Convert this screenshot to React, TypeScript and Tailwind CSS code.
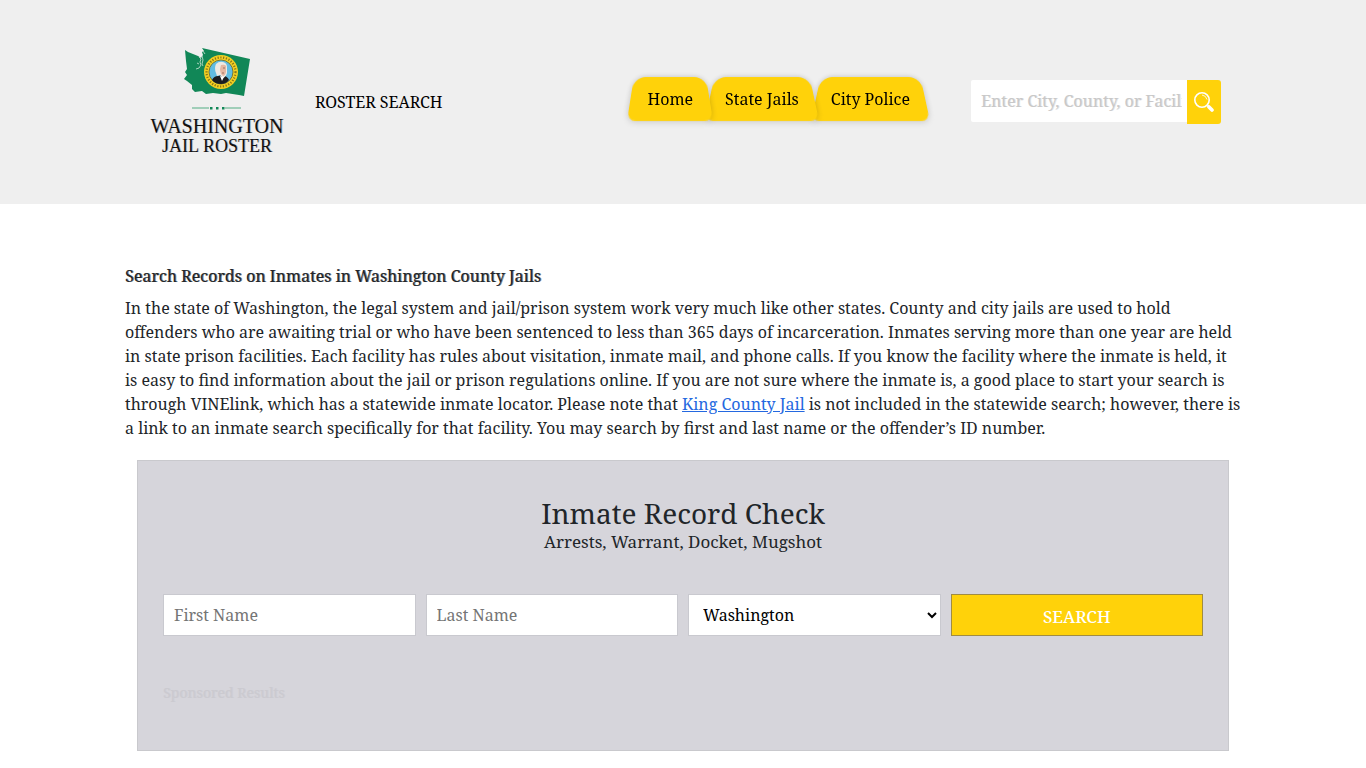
import React from "react";

const tabs = ["Home", "State Jails", "City Police"];
const layers = ["z-30", "z-20", "z-10"];

function StateFlag() {
  return (
    <svg width="66" height="64" viewBox="0 0 66 64" aria-hidden="true">
      <path
        d="M1 2 4 4 9 6 14 8 17 10 19 7 18 4 20 3 18 0 66 11 60 48 55 47 42 45 37 46 29 45 22 46 18 43 11 44 8 41 8 37 3 33 0 31 3 27 1 24 3 21 2 13Z"
        fill="#118757"
      />
      <path
        d="M15 9l2 2-1 3 1 3-2 3M18 8l1 4-1 4 1 2M13 15l2 1M12 21l3-1M19 3l2 3"
        stroke="#a9d3be"
        strokeWidth="1"
        fill="none"
      />
      <circle cx="37" cy="24" r="17" fill="#f3cf22" />
      <circle cx="37" cy="24" r="14.500" fill="none" stroke="#8a7618" strokeWidth="2.2" strokeDasharray="1.200 1.600" />
      <circle cx="37" cy="24" r="12" fill="#62bde2" stroke="#6f671d" strokeWidth="0.8" />
      <path d="M28 32q2-4 6-4l5-1q5 2 6 5-3 4-8 4-6 0-9-4Z" fill="#1b1d20" />
      <path d="M32 25q-2-5 0-9 3-3 7-2 4 1 4 5v6q-1 4-4 5l-3-3-3 1Z" fill="#eee9e3" />
      <path d="M37 17q4-1 5 1v6q-1 4-3 4-3-2-3-7Z" fill="#e5b7a2" />
      <path d="M39 20h2M38 25h2" stroke="#7c5547" strokeWidth="0.7" />
      <path d="M36 28l2 5 2-4Z" fill="#fff" />
      <path d="M8 60H25M41 60H57" stroke="#86c3a8" strokeWidth="1.6" />
      <path d="M26 59h2.500v2.500h-2.500zM32 59h2.500v2.500h-2.500zM38 59h2.500v2.500h-2.500z" fill="#118757" />
    </svg>
  );
}

function SearchGlyph() {
  return (
    <svg width="20" height="20" viewBox="0 0 20 20" fill="none" stroke="#fff" aria-hidden="true">
      <circle cx="8" cy="8" r="7.200" strokeWidth="1.6" />
      <path d="M8 3q4 .5 5 4.500" strokeWidth="0.8" />
      <path d="M13.500 13.500l.8.8" strokeWidth="2" />
      <path d="M15 15l3 3" strokeWidth="3.600" strokeLinecap="round" />
    </svg>
  );
}

export default function App() {
  const field =
    "h-[42px] w-full min-w-0 rounded-none border border-[#c9c9cf] bg-white px-[10px] text-[16px] placeholder:text-[#757575] outline-none";
  return (
    <div className="font-['Noto_Serif',serif] text-[16px] leading-6 text-[#212529]">
      <header className="bg-[#efefef]">
        <div className="mx-auto flex min-h-[204px] max-w-[1140px] items-center pr-[32px] pl-[36px]">
          <a
            href="#"
            className="flex w-[136px] shrink-0 flex-col items-center text-center font-['Liberation_Serif',serif] text-[20px] leading-5 text-[#111] [text-shadow:1px_0_0_rgba(17,17,17,0.25)]"
          >
            <StateFlag />
            <span className="mt-1">WASHINGTON</span>
            <span className="text-[18px]">JAIL ROSTER</span>
          </a>
          <a href="#" className="ml-[30px] whitespace-nowrap text-black">ROSTER SEARCH</a>
          <nav className="ml-auto flex pb-1.5">
            {tabs.map((tab, i) => (
              <a
                key={tab}
                href="#"
                className={`relative flex h-11 items-center px-4 whitespace-nowrap text-black before:absolute before:inset-x-[-4px] before:inset-y-0 before:-z-10 before:origin-bottom before:rounded-t-[14px] before:rounded-b-[8px] before:bg-[#ffd20a] before:shadow-[0_0_6px_rgba(0,0,0,0.2)] before:[transform:scaleY(1.19)_perspective(8px)_rotateX(2deg)] isolate ${layers[i]}`}
              >
                {tab}
              </a>
            ))}
          </nav>
          <form className="ml-[45px] flex items-start" onSubmit={(e) => e.preventDefault()}>
            <input
              type="text"
              aria-label="City, county or facility"
              placeholder="Enter City, County, or Facility"
              className="h-[42px] w-[216px] rounded-l-[2px] bg-white pr-[5px] pl-[10px] text-[16px] outline-none placeholder:text-[#c8c8c8] placeholder:[text-shadow:1px_0_0_rgba(200,200,200,0.5)]"
            />
            <button type="submit" aria-label="Search" className="flex h-11 w-[34px] items-center justify-center rounded-r-[3px] bg-[#ffd20a]">
              <SearchGlyph />
            </button>
          </form>
        </div>
      </header>
      <main className="mx-auto max-w-[1140px] px-3 pt-[60px]">
        <h1 className="mb-2 text-[16px] leading-6 [text-shadow:1px_0_0_rgba(33,37,41,0.6)]">
          Search Records on Inmates in Washington County Jails
        </h1>
        <p>
          In the state of Washington, the legal system and jail/prison system work very much like other states. County and city jails are used to hold
          offenders who are awaiting trial or who have been sentenced to less than 365 days of incarceration. Inmates serving more than one year are held
          in state prison facilities. Each facility has rules about visitation, inmate mail, and phone calls. If you know the facility where the inmate is
          held, it is easy to find information about the jail or prison regulations online. If you are not sure where the inmate is, a good place to start
          your search is through VINElink, which has a statewide inmate locator. Please note that{" "}
          <a href="#" className="text-[#2468e0] underline">King County Jail</a> is not included in the statewide search; however, there is a link to an
          inmate search specifically for that facility. You may search by first and last name or the offender’s ID number.
        </p>
        <section className="mx-3 mt-5 border border-[#c9c9cd] bg-[#d6d5db] px-[25px] pt-[35px] pb-[45px]">
          <h2 className="text-center text-[28px] leading-[34px]">Inmate Record Check</h2>
          <p className="text-center text-[17px]">Arrests, Warrant, Docket, Mugshot</p>
          <form className="mt-10 grid grid-cols-4 gap-[10px]" onSubmit={(e) => e.preventDefault()}>
            <input type="text" aria-label="First Name" placeholder="First Name" className={field} />
            <input type="text" aria-label="Last Name" placeholder="Last Name" className={field} />
            <select aria-label="State" defaultValue="Washington" className={`${field} text-black`}>
              <option>Washington</option>
            </select>
            <button type="submit" className="h-[42px] border border-[#a08c42] bg-[#ffd20a] pt-1 text-[17px] font-medium text-white">
              SEARCH
            </button>
          </form>
          <p className="mt-[45px] text-[14px] leading-6 text-[#cbcad0] [text-shadow:1px_0_0_rgba(203,202,208,0.6)]">Sponsored Results</p>
        </section>
      </main>
    </div>
  );
}
